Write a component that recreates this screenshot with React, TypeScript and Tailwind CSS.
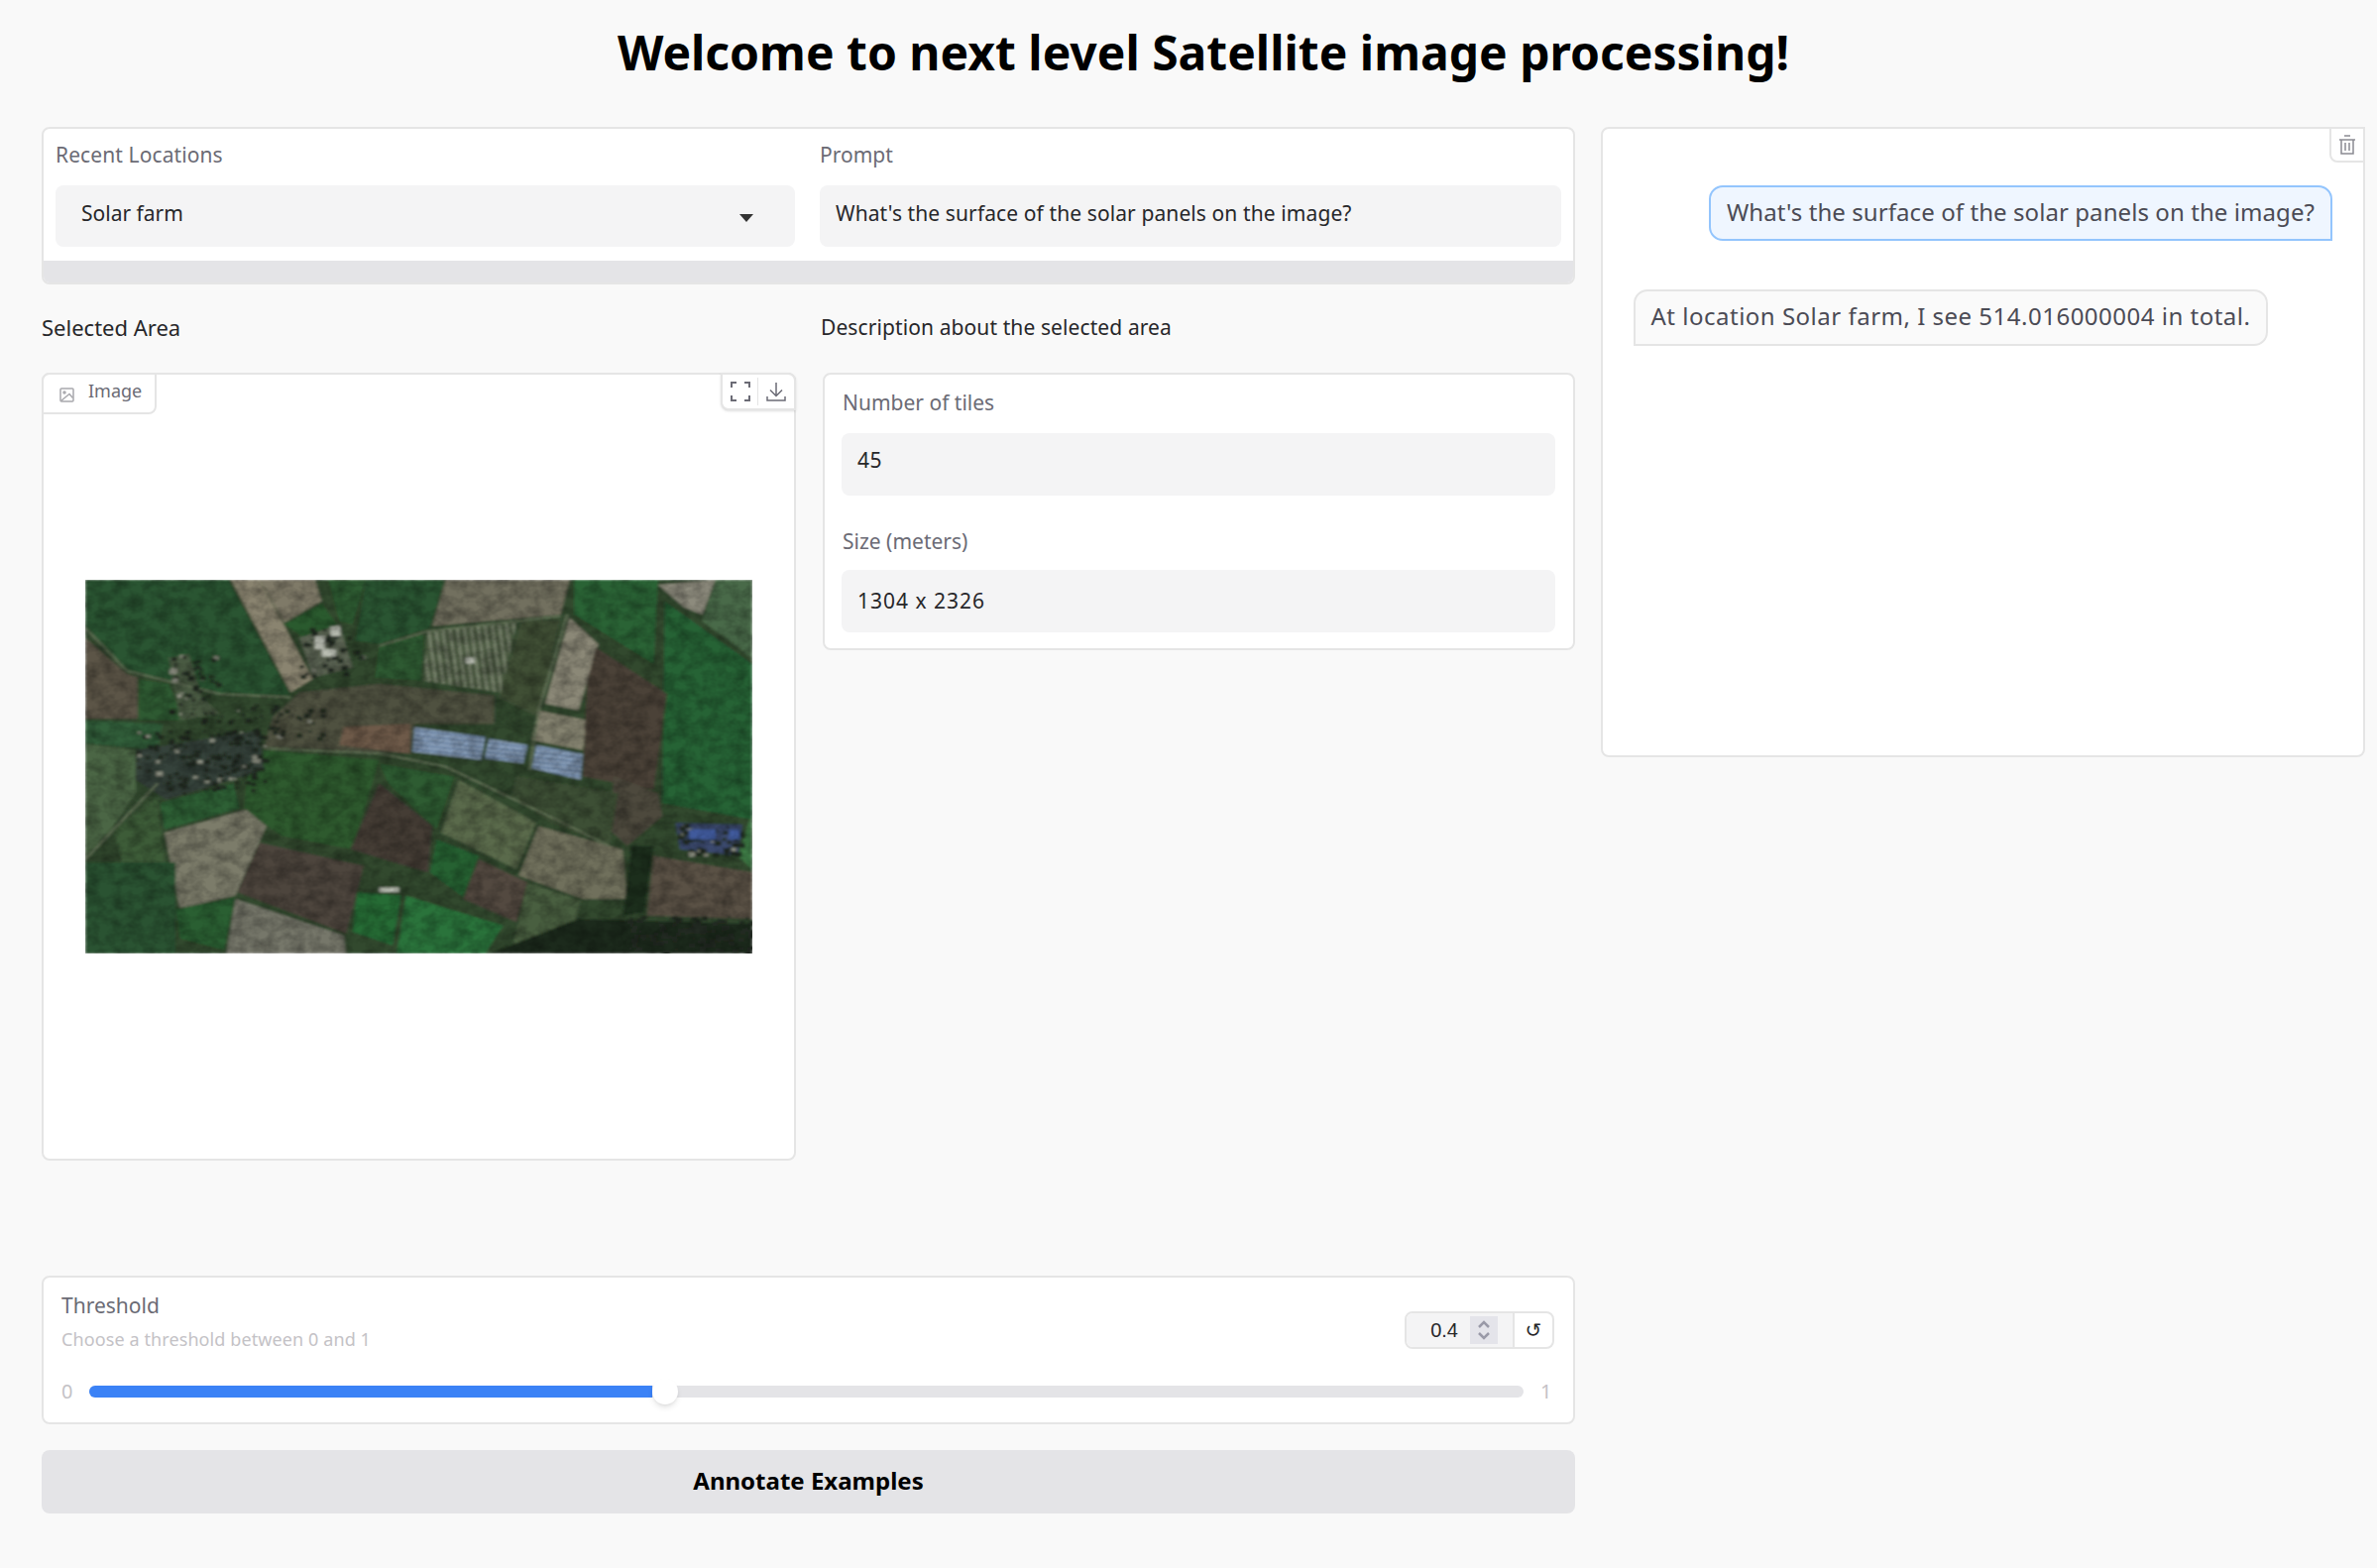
const font = "font-['Noto_Sans',sans-serif]";

// field polygons, traced from the picture (coords match the viewBox below)
const fields: [string, string][] = [
  ['36,45 360,45 500,395 340,390 220,350 130,320 36,190', '#2c5530'],
  ['36,220 130,330 155,340 155,465 36,465', '#5c5546'],
  ['155,345 225,360 260,470 155,470', '#2f5a30'],
  ['36,540 150,560 150,690 100,790 36,880', '#4b6644'],
  ['205,720 370,660 385,735 215,800', '#2d6034'],
  ['365,45 430,45 550,345 500,385', '#8a8470'],
  ['430,45 555,45 570,110 485,175', '#7f7a68'],
  ['485,180 570,115 610,190 530,220', '#2c5a2e'],
  ['585,45 670,45 640,180 610,170', '#2e5c30'],
  ['670,45 850,45 815,190 700,240 645,230', '#2c5530'],
  ['700,245 800,210 795,350 690,340', '#2d5a30'],
  ['850,45 1130,45 1110,150 820,185', '#726f5f'],
  ['810,200 1010,175 975,385 800,350', '#66705a'],
  ['1020,170 1110,165 1060,460 970,400', '#3f4f35'],
  ['1130,160 1195,240 1150,440 1075,420', '#8b8877'],
  ['1060,440 1170,470 1160,560 1045,530', '#85836f'],
  ['1140,45 1330,45 1320,300 1140,150', '#2a6434'],
  ['1330,60 1460,45 1430,150 1390,130', '#8d8b7d'],
  ['1460,45 1543,45 1543,280 1430,170', '#4a6b48'],
  ['1345,110 1543,300 1543,770 1340,720', '#286435'],
  ['1190,250 1350,390 1320,680 1160,640 1170,350', '#4c4238'],
  ['1230,640 1330,690 1340,760 1260,850 1220,800', '#4d4a3c'],
  ['460,460 520,385 700,360 960,395 960,480 780,480 770,570 440,550', '#4f5140'],
  ['620,490 770,480 770,570 610,545', '#6e5a48'],
  ['440,560 700,590 640,860 480,820 395,740 400,650', '#2f5a2f'],
  ['700,660 820,790 810,930 635,860', '#443c35'],
  ['700,600 870,640 830,800 720,660', '#2e5b30'],
  ['880,650 1055,780 1010,920 840,810', '#5a6a4c'],
  ['1010,640 1240,690 1220,850 1090,780 1000,700', '#3e5034'],
  ['1060,790 1250,860 1260,1010 1160,1010 1015,940', '#70705c'],
  ['830,830 925,880 890,1005 815,930', '#266233'],
  ['925,890 1035,960 1010,1080 890,1010', '#53493f'],
  ['215,810 400,740 445,790 375,1000 250,1040', '#7b7b6a'],
  ['430,840 665,910 625,1115 380,990', '#4e453c'],
  ['375,1010 620,1120 625,1175 355,1175', '#76776a'],
  ['240,1040 375,1005 350,1165 250,1130', '#2c5f30'],
  ['650,990 750,1000 730,1150 640,1110', '#266c36'],
  ['760,1000 980,1090 940,1175 740,1175', '#2b733b'],
  ['1035,960 1155,1015 1140,1100 1000,1165', '#4a5f40'],
  ['1320,880 1543,930 1543,1070 1305,1060', '#5a5145'],
  ['950,1175 1150,1070 1543,1085 1543,1175', '#1c2a1a'],
  ['1270,850 1320,850 1300,1050 1250,1060', '#1f2e1e'],
  ['36,470 210,480 200,560 36,540', '#33603a'],
  ['100,800 200,700 215,900 120,900', '#3c5c38'],
  ['36,900 240,900 240,1175 36,1175', '#2a5230'],
  ['150,560 430,500 440,620 220,710 150,650', '#36423a'],
  ['225,280 270,270 300,400 340,450 250,470', '#4a5a42'],
  ['520,220 610,180 640,310 550,340', '#5d6655'],
  ['1370,780 1520,785 1510,880 1380,860', '#3a4a6e'],
  ['1540,760 1543,920 1510,880', '#3d7a44'],
];

const solar = [
  '780,490 940,520 930,590 775,565',
  '948,525 1035,545 1025,600 938,585',
  '1055,545 1160,572 1155,650 1045,615',
];

// small seeded scatter for the houses in the villages
const specks = (count: number, x: number, y: number, w: number, h: number, seed: number, lightShare: number) => {
  let s = seed;
  const next = () => {
    s = (s * 16807) % 2147483647;
    return s / 2147483647;
  };
  return Array.from({ length: count }, () => ({
    x: x + next() * w,
    y: y + next() * h,
    size: 5 + next() * 10,
    light: next() < lightShare,
  }));
};

const houses = [
  ...specks(150, 150, 500, 290, 190, 71, 0.12),
  ...specks(50, 225, 270, 110, 200, 113, 0.15),
  ...specks(40, 520, 190, 140, 150, 211, 0.1),
  ...specks(60, 1375, 780, 145, 95, 307, 0.1),
  ...specks(50, 340, 420, 230, 100, 409, 0.05),
  ...specks(130, 1260, 1060, 280, 110, 503, 0),
];

const SatelliteImage = () => (
  <svg viewBox="36 45 1507 1130" preserveAspectRatio="none" className="block w-[673px] h-[377px]">
    <defs>
      <filter id="soft" x="0" y="0" width="100%" height="100%">
        <feGaussianBlur stdDeviation="3.5" />
      </filter>
      <filter id="grain" x="0" y="0" width="100%" height="100%">
        <feTurbulence type="fractalNoise" baseFrequency="0.03" numOctaves="3" seed="4" />
        <feColorMatrix values="0 0 0 0 0  0 0 0 0 0  0 0 0 0 0  1.4 0 0 0 -0.45" />
      </filter>
      <pattern id="rows" width="22" height="14" patternUnits="userSpaceOnUse" patternTransform="rotate(8)">
        <rect width="22" height="14" fill="#6f87a6" />
        <rect width="22" height="5" fill="#94a8c0" />
      </pattern>
      <pattern id="orchard" width="16" height="18" patternUnits="userSpaceOnUse" patternTransform="rotate(-6)">
        <rect width="16" height="18" fill="#4a5840" />
        <rect width="6" height="18" fill="#7c8670" />
      </pattern>
    </defs>
    <g filter="url(#soft)">
      <rect x="36" y="45" width="1507" height="1130" fill="#33492f" />
      {fields.map(([points, fill]) => (
        <polygon key={points} points={points} fill={fill} />
      ))}
      <polygon points="810,200 1010,175 975,385 800,350" fill="url(#orchard)" />
      {solar.map((points) => (
        <polygon key={points} points={points} fill="url(#rows)" />
      ))}
      <g fill="none" stroke="#66755a" strokeWidth="5">
        <polyline points="440,555 700,570 850,610 1100,770 1220,850" />
        <polyline points="36,190 130,320 220,350 340,390 500,400" />
        <polyline points="36,890 200,660" />
        <polyline points="1125,150 1060,440 1040,620" />
        <polyline points="700,245 810,200 1110,155" />
      </g>
      {houses.map((h, i) => (
        <rect key={i} x={h.x} y={h.y} width={h.size} height={h.size} fill={h.light ? '#8f9284' : '#232c22'} />
      ))}
      <g fill="#b9bdb2">
        <rect x="555" y="215" width="22" height="40" />
        <rect x="570" y="255" width="32" height="22" />
        <rect x="590" y="185" width="22" height="30" />
        <rect x="895" y="280" width="20" height="18" />
        <rect x="700" y="975" width="45" height="14" />
      </g>
      <g fill="#3f5a9c">
        <rect x="1490" y="800" width="25" height="30" />
        <rect x="1400" y="800" width="60" height="30" />
      </g>
    </g>
    <rect x="36" y="45" width="1507" height="1130" filter="url(#grain)" className="opacity-40" />
  </svg>
);

const Label = ({ children }: { children: string }) => (
  <div className="text-[21px] leading-[30px] text-[#6b6b75]">{children}</div>
);

const Field = ({ value, className }: { value: string; className: string }) => (
  <div className={`flex items-center rounded-[8px] bg-[#f4f4f5] text-[21px] text-[#27272a] ${className}`}>
    {value}
  </div>
);

const App = () => {
  return (
    <div className={`min-h-[1582px] bg-[#f9f9f9] ${font}`}>
      <h1 className="h-[128px] pl-[30px] pt-[23px] text-center text-[48px] leading-[60px] font-bold text-black">
        Welcome to next level Satellite image processing!
      </h1>
      <div className="flex gap-[26px] pl-[42px]">
        {/* left column */}
        <div className="flex w-[1547px] flex-col">
          <div className="h-[159px] overflow-hidden rounded-[8px] border-2 border-[#e5e5e5] bg-white">
            <div className="flex h-[133px] gap-[25px] pl-[12px] pr-[12px]">
              <div className="w-[746px] pt-[11px]">
                <div className="tracking-[0.1px]">
                  <Label>Recent Locations</Label>
                </div>
                <div className="mt-[16px] flex h-[62px] items-center justify-between rounded-[8px] bg-[#f4f4f5] pb-[4px] pl-[26px] pr-[42px] text-[21px] text-[#27272a]">
                  Solar farm
                  <svg width="14" height="8" viewBox="0 0 14 8" className="mt-[7px]">
                    <path d="M0 0h14L7 8z" fill="#333" />
                  </svg>
                </div>
              </div>
              <div className="flex-1 pt-[11px]">
                <Label>Prompt</Label>
                <Field value="What's the surface of the solar panels on the image?" className="mt-[16px] h-[62px] pb-[5px] pl-[16px] tracking-[0.1px]" />
              </div>
            </div>
            <div className="h-[26px] bg-[#e4e4e7]" />
          </div>

          <div className="mt-[28px] flex gap-[26px] text-[21px] leading-[30px] text-[#27272a]">
            <div className="w-[760px] text-[22px]">Selected Area</div>
            <div className="tracking-[0.1px]">Description about the selected area</div>
          </div>

          <div className="mt-[31px] flex h-[795px] items-start gap-[27px]">
            <div className="relative flex h-full w-[761px] items-center rounded-[8px] border-2 border-[#e5e5e5] bg-white pl-[42px]">
              <div className="absolute -left-[2px] -top-[2px] flex h-[42px] w-[116px] items-center gap-[14px] rounded-br-[8px] rounded-tl-[8px] border-2 border-[#e5e5e5] bg-white pb-[6px] pl-[16px] text-[18px] text-[#6b6b75]">
                <svg width="15" height="15" viewBox="0 0 15 15" fill="none" stroke="#a8a8ad" strokeWidth="1.5" className="mt-[8px]">
                  <rect x="1" y="1" width="13" height="13" rx="1" />
                  <circle cx="5" cy="5" r="1" />
                  <path d="M1.5 13.5 10 6.5l3.5 4" />
                </svg>
                Image
              </div>
              <div className="absolute -right-[2px] -top-[2px] flex h-[38px] w-[76px] items-center justify-around rounded-bl-[8px] rounded-tr-[8px] border-2 border-[#e5e5e5] bg-white px-[4px] shadow-sm">
                <svg width="20" height="20" viewBox="0 0 20 20" fill="none" stroke="#6b6b75" strokeWidth="2">
                  <path d="M1 6V1h5M14 1h5v5M19 14v5h-5M6 19H1v-5" />
                </svg>
                <div className="h-[28px] w-px bg-[#e5e5e5]" />
                <svg width="20" height="20" viewBox="0 0 20 20" fill="none" stroke="#6b6b75" strokeWidth="1.5">
                  <path d="M10 1v13M4 8.5l6 6 6-6M1 15v4h18v-4" />
                </svg>
              </div>
              <SatelliteImage />
            </div>

            <div className="h-[280px] w-[759px] rounded-[8px] border-2 border-[#e5e5e5] bg-white pl-[17px] pr-[18px] pt-[13px]">
              <div className="pl-[1px]">
                <Label>Number of tiles</Label>
              </div>
              <Field value="45" className="mt-[16px] h-[63px] pb-[7px] pl-[16px] tracking-[0.5px]" />
              <div className="mt-[31px] pl-[1px]">
                <Label>Size (meters)</Label>
              </div>
              <Field value="1304 x 2326" className="mt-[14px] h-[63px] pl-[16px] tracking-[1px]" />
            </div>
          </div>

          <div className="mt-[116px] h-[150px] rounded-[8px] border-2 border-[#e5e5e5] bg-white pl-[18px] pr-[19px] pt-[13px]">
            <div className="flex items-start justify-between">
              <div>
                <Label>Threshold</Label>
                <div className="mt-[4px] text-[18px] leading-[30px] tracking-[0.1px] text-[#c4c2c6]">Choose a threshold between 0 and 1</div>
              </div>
              <div className="mt-[21px] flex h-[38px] w-[151px] overflow-hidden rounded-[8px] border-2 border-[#e5e5e5] font-['Liberation_Sans',sans-serif]">
                <div className="flex w-[107px] items-center justify-end bg-[#f4f4f5] pr-[15px] text-[20px] text-[#27272a]">
                  0.4
                  <div className="ml-[12px] flex h-[28px] w-[28px] items-center justify-center bg-[#e4e4ea]">
                    <svg width="14" height="24" viewBox="0 0 14 24" fill="none" stroke="#9a9aa8" strokeWidth="2.5">
                      <path d="M2 9l5-5 5 5M2 15l5 5 5-5" />
                    </svg>
                  </div>
                </div>
                <div className="flex flex-1 items-center justify-center border-l-2 border-[#e5e5e5] font-['DejaVu_Sans',sans-serif] text-[20px] text-[#27272a]">
                  ↺
                </div>
              </div>
            </div>
            <div className="mt-[24px] flex items-center text-[20px] leading-[27px] text-[#c4c2c6]">
              <span className="w-[28px]">0</span>
              <div className="relative h-[12px] w-[1447px] rounded-full bg-[#e4e4e7]">
                <div className="h-full w-[568px] rounded-l-full bg-[#3b82f6]" />
                <div className="absolute left-[568px] top-[-7px] h-[26px] w-[26px] rounded-full bg-white shadow-md" />
              </div>
              <span className="ml-[17px]">1</span>
            </div>
          </div>

          <div className="mt-[26px] flex h-[64px] items-center justify-center rounded-[8px] bg-[#e4e4e7] pb-[3px] text-[24px] font-bold text-black">
            Annotate Examples
          </div>
        </div>

        {/* chat column */}
        <div className="relative h-[636px] w-[771px] rounded-[8px] border-2 border-[#e5e5e5] bg-white">
          <div className="absolute -right-[2px] -top-[2px] flex h-[36px] w-[36px] items-center justify-center rounded-bl-[8px] border-2 border-[#e5e5e5] bg-white">
            <svg width="18" height="20" viewBox="0 0 18 20" fill="none" stroke="#8a8a92" strokeWidth="1.5">
              <path d="M6 1h6M1 5h16M3 5v14h12V5M7 8v8M11 8v8" />
            </svg>
          </div>
          <div className="flex flex-col pt-[57px]">
            <div className="ml-[107px] flex h-[56px] w-[629px] items-center justify-center rounded-[14px] rounded-br-none border-2 border-[#93c5fd] bg-[#eff6ff] pb-[2px] text-[24px] tracking-[0.08px] text-[#4b4b55]">
              What's the surface of the solar panels on the image?
            </div>
            <div className="ml-[31px] mt-[49px] flex h-[57px] w-[640px] items-center justify-center rounded-[14px] rounded-bl-none border-2 border-[#e5e5e5] bg-[#fafafa] pb-[3px] text-[24px] tracking-[0.5px] text-[#4b4b55]">
              At location Solar farm, I see 514.016000004 in total.
            </div>
          </div>
        </div>
      </div>
    </div>
  );
};

export default App;
